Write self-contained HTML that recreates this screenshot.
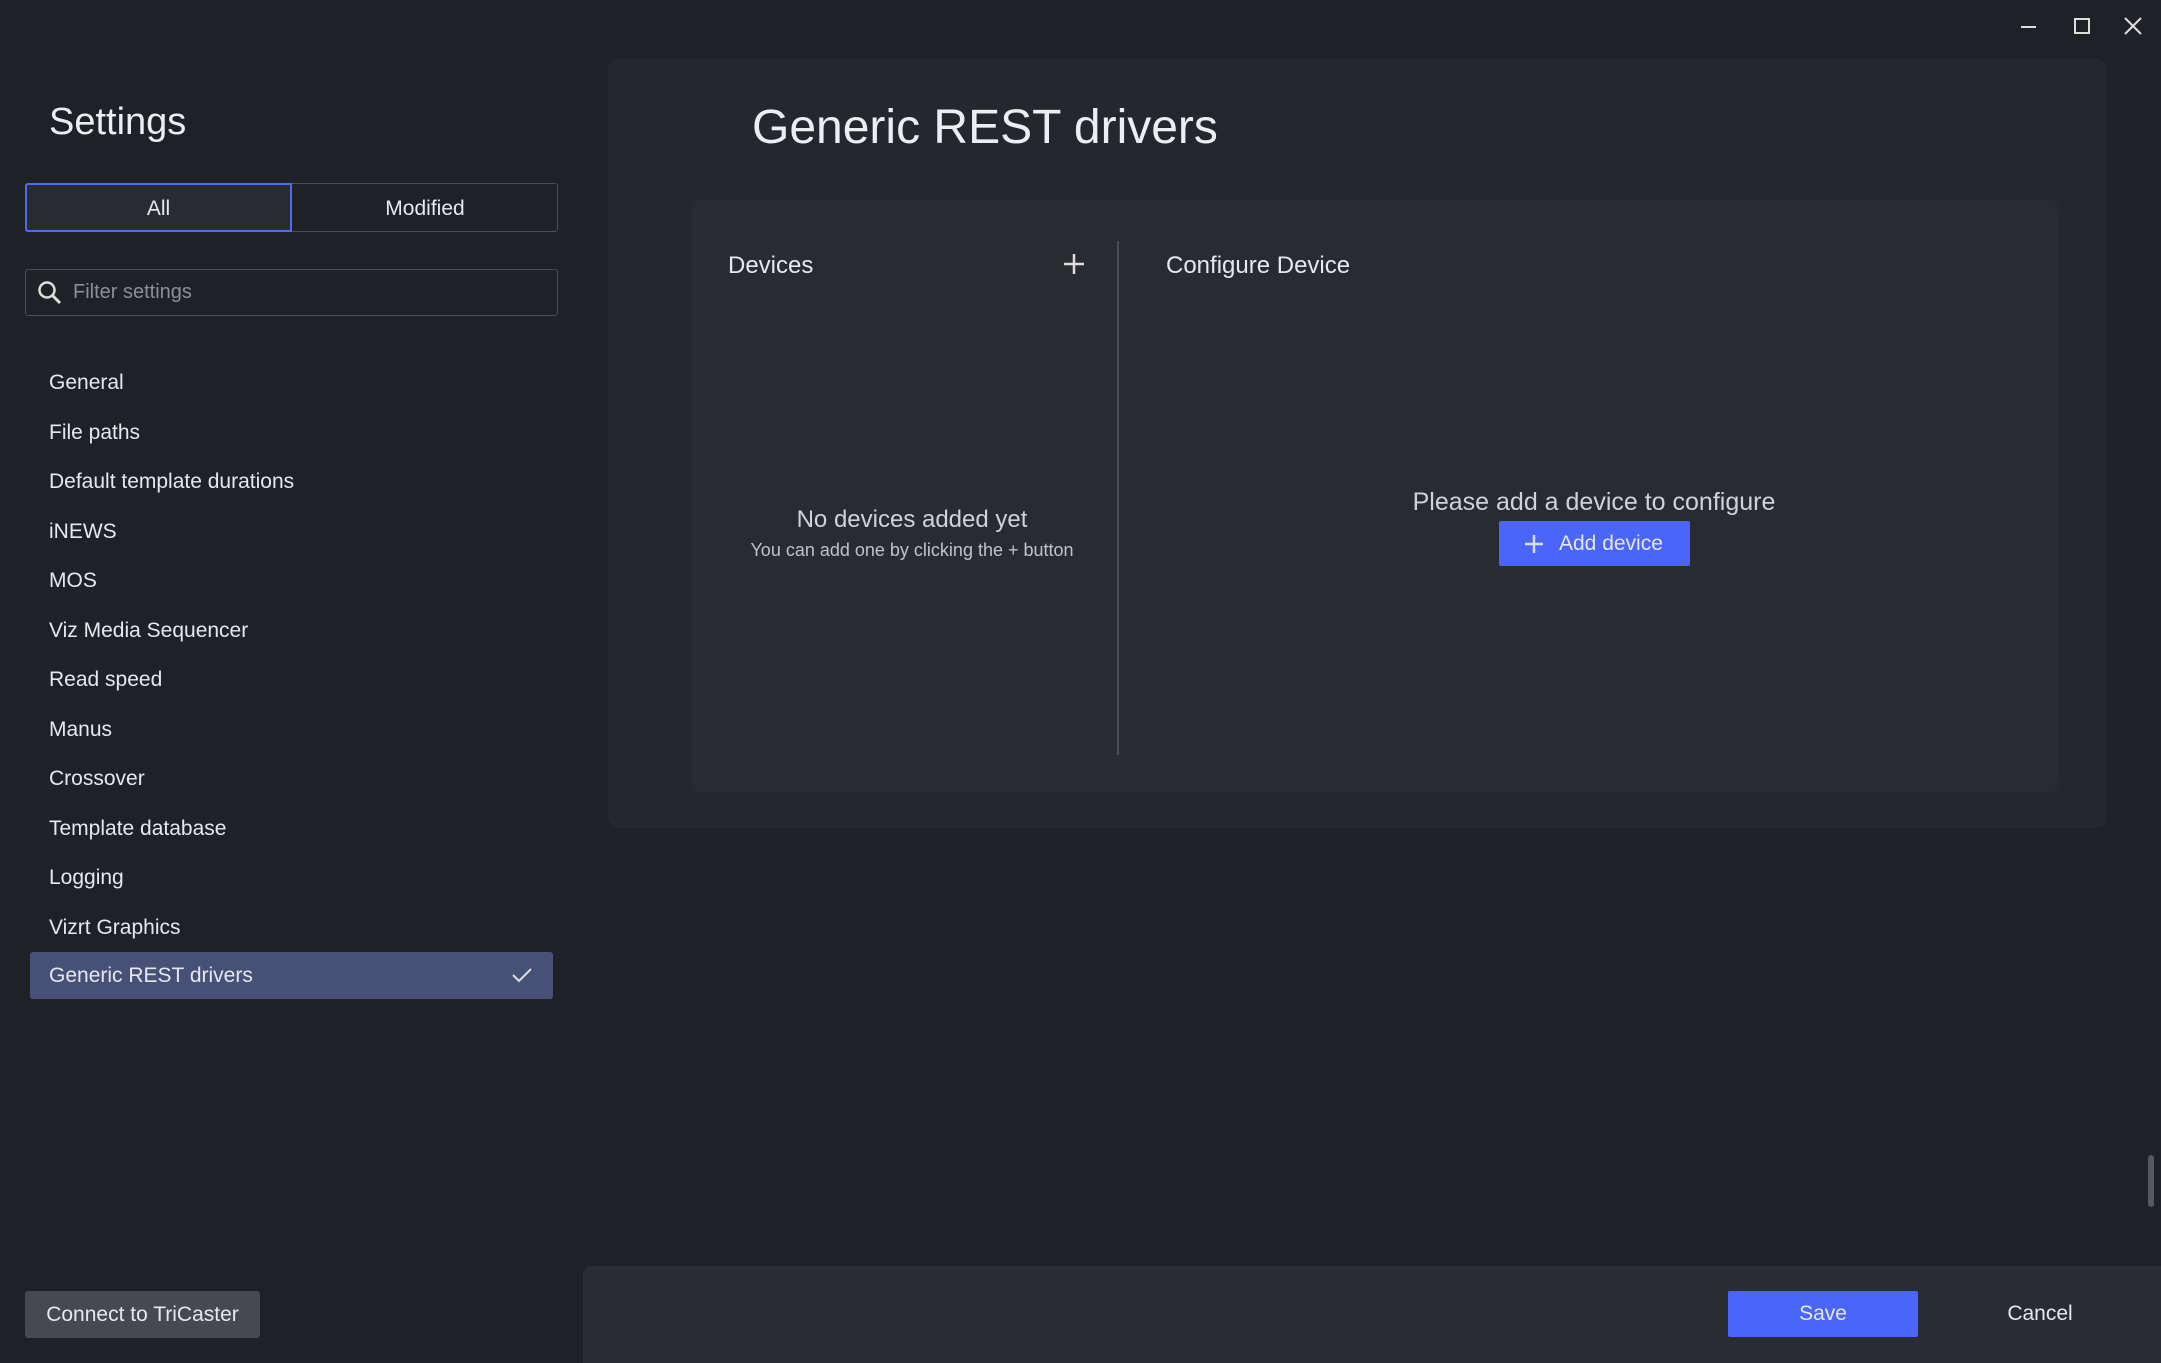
<!DOCTYPE html>
<html><head><meta charset="utf-8"><style>
*{margin:0;padding:0;box-sizing:border-box}
body{width:2161px;height:1363px;background:#1e2126;font-family:"Liberation Sans",sans-serif;color:#e6e8ec;position:relative;overflow:hidden}
.a{position:absolute}
.nav{position:absolute;left:49px;font-size:21px;color:#e6e8ec}
</style></head><body>
<div class="a" style="left:2021px;top:26px;width:15px;height:2px;background:#ddd"></div>
<div class="a" style="left:2074px;top:18px;width:16px;height:16px;border:2px solid #ddd"></div>
<svg class="a" style="left:2124px;top:17px" width="18" height="18"><path d="M1 1L17 17M17 1L1 17" stroke="#ddd" stroke-width="2"/></svg>

<div class="a" style="left:49px;top:101px;font-size:38px;color:#eceef2">Settings</div>
<div class="a" style="left:25px;top:183px;width:533px;height:49px;border:1.5px solid #4a4d52;border-radius:3px"></div>
<div class="a" style="left:25px;top:183px;width:267px;height:49px;border:2px solid #4a6cf7;background:#282c31;border-radius:3px 0 0 3px;font-size:21px;text-align:center;line-height:47px">All</div>
<div class="a" style="left:292px;top:184px;width:266px;height:49px;font-size:21px;text-align:center;line-height:49px">Modified</div>
<div class="a" style="left:25px;top:269px;width:533px;height:47px;border:1.5px solid #4a4d52;border-radius:3px"></div>
<svg class="a" style="left:36px;top:279px" width="28" height="28"><circle cx="11" cy="11" r="7.5" stroke="#ddd" stroke-width="2.5" fill="none"/><path d="M16.5 16.5L24 24" stroke="#ddd" stroke-width="3"/></svg>
<div class="a" style="left:73px;top:281px;font-size:20px;color:#8c8f94">Filter settings</div>

<div class="nav" style="top:371px">General</div>
<div class="nav" style="top:421px">File paths</div>
<div class="nav" style="top:470px">Default template durations</div>
<div class="nav" style="top:520px">iNEWS</div>
<div class="nav" style="top:569px">MOS</div>
<div class="nav" style="top:619px">Viz Media Sequencer</div>
<div class="nav" style="top:668px">Read speed</div>
<div class="nav" style="top:718px">Manus</div>
<div class="nav" style="top:767px">Crossover</div>
<div class="nav" style="top:817px">Template database</div>
<div class="nav" style="top:866px">Logging</div>
<div class="nav" style="top:916px">Vizrt Graphics</div>
<div class="a" style="left:30px;top:952px;width:523px;height:47px;background:#475177;border-radius:3px"></div>
<div class="nav" style="top:964px">Generic REST drivers</div>
<svg class="a" style="left:511px;top:966px" width="22" height="18"><path d="M2 9L8 15L20 3" stroke="#ddd" stroke-width="2" fill="none"/></svg>

<div class="a" style="left:25px;top:1291px;width:235px;height:47px;background:#464a4e;border-radius:3px;font-size:21px;text-align:center;line-height:47px">Connect to TriCaster</div>

<div class="a" style="left:608px;top:58px;width:1499px;height:770px;background:#24282d;border-radius:12px"></div>
<div class="a" style="left:752px;top:100px;font-size:48px;color:#eceef2">Generic REST drivers</div>
<div class="a" style="left:692px;top:200px;width:1367px;height:592px;background:#282c31;border-radius:10px"></div>
<div class="a" style="left:728px;top:252px;font-size:24px">Devices</div>
<svg class="a" style="left:1064px;top:254px" width="20" height="20"><path d="M10 0V20M0 10H20" stroke="#ddd" stroke-width="2.5"/></svg>
<div class="a" style="left:1117px;top:241px;width:2px;height:514px;background:#4a4d52"></div>
<div class="a" style="left:1166px;top:252px;font-size:24px">Configure Device</div>
<div class="a" style="left:712px;top:506px;width:400px;text-align:center;font-size:24px;color:#d0d2d6">No devices added yet</div>
<div class="a" style="left:712px;top:540px;width:400px;text-align:center;font-size:18px;color:#c0c2c6">You can add one by clicking the + button</div>
<div class="a" style="left:1344px;top:488px;width:500px;text-align:center;font-size:25px;color:#d0d2d6">Please add a device to configure</div>
<div class="a" style="left:1499px;top:521px;width:191px;height:45px;background:#4a65fa;border-radius:2px;font-size:21px;line-height:45px;padding-left:60px">Add device</div>
<svg class="a" style="left:1524px;top:534px" width="20" height="20"><path d="M10 1V19M1 10H19" stroke="#ddd" stroke-width="2.5"/></svg>

<div class="a" style="left:2148px;top:1155px;width:6px;height:52px;background:#55585d;border-radius:3px"></div>
<div class="a" style="left:583px;top:1266px;width:1578px;height:97px;background:#292d32;border-radius:8px 0 0 0"></div>
<div class="a" style="left:1728px;top:1291px;width:190px;height:46px;background:#4a65fa;border-radius:2px;font-size:21px;text-align:center;line-height:46px">Save</div>
<div class="a" style="left:1980px;top:1291px;width:120px;font-size:21px;text-align:center;line-height:46px">Cancel</div>
</body></html>
